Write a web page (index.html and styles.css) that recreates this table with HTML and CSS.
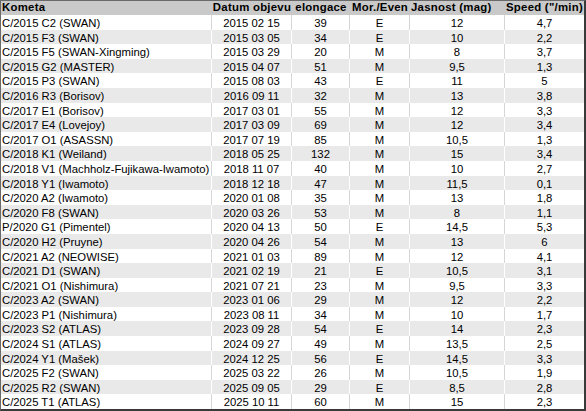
FILE: index.html
```html
<!DOCTYPE html>
<html lang="cs">
<head>
<meta charset="utf-8">
<title>Komety</title>
<link rel="stylesheet" href="styles.css">
</head>
<body>
<div class="sheet">
  <div class="row head">
    <div class="c name">Kometa</div>
    <div class="c">Datum objevu</div>
    <div class="c">elongace</div>
    <div class="c">Mor./Even</div>
    <div class="c left">Jasnost (mag)</div>
    <div class="c">Speed ("/min)</div>
  </div>
  <div class="row"><div class="c name">C/2015 C2 (SWAN)</div><div class="c">2015 02 15</div><div class="c">39</div><div class="c">E</div><div class="c">12</div><div class="c">4,7</div></div>
  <div class="row"><div class="c name">C/2015 F3 (SWAN)</div><div class="c">2015 03 05</div><div class="c">34</div><div class="c">E</div><div class="c">10</div><div class="c">2,2</div></div>
  <div class="row"><div class="c name">C/2015 F5 (SWAN-Xingming)</div><div class="c">2015 03 29</div><div class="c">20</div><div class="c">M</div><div class="c">8</div><div class="c">3,7</div></div>
  <div class="row"><div class="c name">C/2015 G2 (MASTER)</div><div class="c">2015 04 07</div><div class="c">51</div><div class="c">M</div><div class="c">9,5</div><div class="c">1,3</div></div>
  <div class="row"><div class="c name">C/2015 P3 (SWAN)</div><div class="c">2015 08 03</div><div class="c">43</div><div class="c">E</div><div class="c">11</div><div class="c">5</div></div>
  <div class="row"><div class="c name">C/2016 R3 (Borisov)</div><div class="c">2016 09 11</div><div class="c">32</div><div class="c">M</div><div class="c">13</div><div class="c">3,8</div></div>
  <div class="row"><div class="c name">C/2017 E1 (Borisov)</div><div class="c">2017 03 01</div><div class="c">55</div><div class="c">M</div><div class="c">12</div><div class="c">3,3</div></div>
  <div class="row"><div class="c name">C/2017 E4 (Lovejoy)</div><div class="c">2017 03 09</div><div class="c">69</div><div class="c">M</div><div class="c">12</div><div class="c">3,4</div></div>
  <div class="row"><div class="c name">C/2017 O1 (ASASSN)</div><div class="c">2017 07 19</div><div class="c">85</div><div class="c">M</div><div class="c">10,5</div><div class="c">1,3</div></div>
  <div class="row"><div class="c name">C/2018 K1 (Weiland)</div><div class="c">2018 05 25</div><div class="c">132</div><div class="c">M</div><div class="c">15</div><div class="c">3,4</div></div>
  <div class="row"><div class="c name">C/2018 V1 (Machholz-Fujikawa-Iwamoto)</div><div class="c">2018 11 07</div><div class="c">40</div><div class="c">M</div><div class="c">10</div><div class="c">2,7</div></div>
  <div class="row"><div class="c name">C/2018 Y1 (Iwamoto)</div><div class="c">2018 12 18</div><div class="c">47</div><div class="c">M</div><div class="c">11,5</div><div class="c">0,1</div></div>
  <div class="row"><div class="c name">C/2020 A2 (Iwamoto)</div><div class="c">2020 01 08</div><div class="c">35</div><div class="c">M</div><div class="c">13</div><div class="c">1,8</div></div>
  <div class="row"><div class="c name">C/2020 F8 (SWAN)</div><div class="c">2020 03 26</div><div class="c">53</div><div class="c">M</div><div class="c">8</div><div class="c">1,1</div></div>
  <div class="row"><div class="c name">P/2020 G1 (Pimentel)</div><div class="c">2020 04 13</div><div class="c">50</div><div class="c">E</div><div class="c">14,5</div><div class="c">5,3</div></div>
  <div class="row"><div class="c name">C/2020 H2 (Pruyne)</div><div class="c">2020 04 26</div><div class="c">54</div><div class="c">M</div><div class="c">13</div><div class="c">6</div></div>
  <div class="row"><div class="c name">C/2021 A2 (NEOWISE)</div><div class="c">2021 01 03</div><div class="c">89</div><div class="c">M</div><div class="c">12</div><div class="c">4,1</div></div>
  <div class="row"><div class="c name">C/2021 D1 (SWAN)</div><div class="c">2021 02 19</div><div class="c">21</div><div class="c">E</div><div class="c">10,5</div><div class="c">3,1</div></div>
  <div class="row"><div class="c name">C/2021 O1 (Nishimura)</div><div class="c">2021 07 21</div><div class="c">23</div><div class="c">M</div><div class="c">9,5</div><div class="c">3,3</div></div>
  <div class="row"><div class="c name">C/2023 A2 (SWAN)</div><div class="c">2023 01 06</div><div class="c">29</div><div class="c">M</div><div class="c">12</div><div class="c">2,2</div></div>
  <div class="row"><div class="c name">C/2023 P1 (Nishimura)</div><div class="c">2023 08 11</div><div class="c">34</div><div class="c">M</div><div class="c">10</div><div class="c">1,7</div></div>
  <div class="row"><div class="c name">C/2023 S2 (ATLAS)</div><div class="c">2023 09 28</div><div class="c">54</div><div class="c">E</div><div class="c">14</div><div class="c">2,3</div></div>
  <div class="row"><div class="c name">C/2024 S1 (ATLAS)</div><div class="c">2024 09 27</div><div class="c">49</div><div class="c">M</div><div class="c">13,5</div><div class="c">2,5</div></div>
  <div class="row"><div class="c name">C/2024 Y1 (Mašek)</div><div class="c">2024 12 25</div><div class="c">56</div><div class="c">E</div><div class="c">14,5</div><div class="c">3,3</div></div>
  <div class="row"><div class="c name">C/2025 F2 (SWAN)</div><div class="c">2025 03 22</div><div class="c">26</div><div class="c">M</div><div class="c">10,5</div><div class="c">1,9</div></div>
  <div class="row"><div class="c name">C/2025 R2 (SWAN)</div><div class="c">2025 09 05</div><div class="c">29</div><div class="c">E</div><div class="c">8,5</div><div class="c">2,8</div></div>
  <div class="row"><div class="c name">C/2025 T1 (ATLAS)</div><div class="c">2025 10 11</div><div class="c">60</div><div class="c">M</div><div class="c">15</div><div class="c">2,3</div></div>
</div>
</body>
</html>
```

FILE: styles.css
```css
html, body {
  margin: 0;
  padding: 0;
  background: #ffffff;
}

.sheet {
  box-sizing: border-box;
  width: 586px;
  height: 411px;
  overflow: hidden;
  border-top: 1px solid #6a6a6a;
  border-left: 1px solid #6a6a6a;
  border-right: 2px solid #3a3a3a;
  border-bottom: 2px solid #3a3a3a;
  font-family: "Liberation Sans", Arial, sans-serif;
  font-size: 11.3px;
  color: #000000;
  display: flex;
  flex-direction: column;
}

.row {
  display: grid;
  grid-template-columns: 211px 80px 58px 60px 95px 79px;
  height: 14.6px;
  flex: none;
  background: #ffffff;
}

.row:nth-child(odd) {
  background: #e9e9e9;
}

.row.head {
  height: 14px;
  background: #c9c9c9;
  font-weight: bold;
  font-size: 11.4px;
  letter-spacing: 0.25px;
}

.c {
  box-sizing: border-box;
  padding: 2px 0 0 0;
  line-height: 12.6px;
  text-align: center;
  white-space: nowrap;
  border-right: 1px solid #d6d6d6;
}

.c:last-child {
  border-right: none;
}

.c.name {
  text-align: left;
  padding-left: 1px;
}

.head .c {
  border-right: none;
  padding-top: 0;
  line-height: 13px;
  overflow: visible;
}

.head .c.left {
  text-align: left;
  padding-left: 1px;
}

.row:nth-child(odd) .c {
  border-right-color: #ffffff;
}
```
